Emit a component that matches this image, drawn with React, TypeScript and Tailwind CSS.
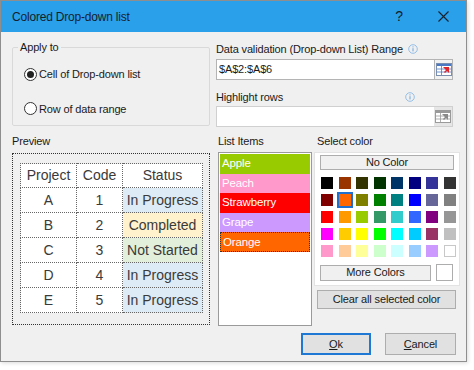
import React from "react";

const palette = [
  ["#000000", "#993300", "#333300", "#003300", "#003366", "#000080", "#333399", "#333333"],
  ["#800000", "#FF6600", "#808000", "#008000", "#008080", "#0000FF", "#666699", "#808080"],
  ["#FF0000", "#FF9900", "#99CC00", "#339966", "#33CCCC", "#3366FF", "#800080", "#969696"],
  ["#FF00FF", "#FFCC00", "#FFFF00", "#00FF00", "#00FFFF", "#00CCFF", "#993366", "#C0C0C0"],
  ["#FF99CC", "#FFCC99", "#FFFF99", "#CCFFCC", "#CCFFFF", "#99CCFF", "#CC99FF", "#FFFFFF"],
];

const items = [
  { name: "Apple", color: "#99CC00" },
  { name: "Peach", color: "#FF99CC" },
  { name: "Strawberry", color: "#FF0000" },
  { name: "Grape", color: "#CC99FF" },
  { name: "Orange", color: "#FF6600" },
];

const rows = [
  { p: "A", c: "1", s: "In Progress", bg: "bg-[#ddebf7]" },
  { p: "B", c: "2", s: "Completed", bg: "bg-[#fff2cc]" },
  { p: "C", c: "3", s: "Not Started", bg: "bg-[#e2efda]" },
  { p: "D", c: "4", s: "In Progress", bg: "bg-[#ddebf7]" },
  { p: "E", c: "5", s: "In Progress", bg: "bg-[#ddebf7]" },
];

function InfoIcon() {
  return (
    <svg width="10" height="10" viewBox="0 0 10 10">
      <circle cx="5" cy="5" r="4.3" fill="none" stroke="#8ab8e6" strokeWidth="0.9" />
      <rect x="4.5" y="4.2" width="1" height="3.2" fill="#6aa3dc" />
      <rect x="4.5" y="2.4" width="1" height="1" fill="#6aa3dc" />
    </svg>
  );
}

function RangeIcon({ disabled }: { disabled?: boolean }) {
  const blue = disabled ? "#9a9a9a" : "#4a78c2";
  const red = disabled ? "#8a8a8a" : "#e0242a";
  return (
    <svg width="16" height="13" viewBox="0 0 16 13">
      <rect x="0.5" y="0.5" width="15" height="12" fill="#ffffff" stroke={disabled ? "#9a9a9a" : "#7a8fb0"} />
      <rect x="1" y="1" width="14" height="2" fill={blue} />
      <line x1="1" y1="6" x2="15" y2="6" stroke={blue} strokeWidth="0.8" />
      <line x1="1" y1="9" x2="15" y2="9" stroke={blue} strokeWidth="0.8" />
      <line x1="5.5" y1="3" x2="5.5" y2="12" stroke={blue} strokeWidth="0.8" />
      <path d="M7 4 L13 4 L13 10 L11 8 L9 10 L8 9 L10 7 Z" fill={red} />
    </svg>
  );
}

function Radio({ checked, label }: { checked?: boolean; label: string }) {
  return (
    <div className="flex items-center gap-[2px]">
      <span className="w-[13px] h-[13px] rounded-full border border-[#333] bg-white flex items-center justify-center">
        {checked && <span className="w-[7px] h-[7px] rounded-full bg-[#222]" />}
      </span>
      <span>{label}</span>
    </div>
  );
}

export default function App() {
  return (
    <div className="w-[474px] h-[370px] bg-white text-[11px] tracking-[-0.15px] text-[#1a1a1a] font-['Liberation_Sans',Arial,sans-serif]">
      <div className="w-[467px] h-[362px] border border-[#8e8e8e] bg-[#f0f0f0] flex flex-col shadow-[1px_1px_4px_rgba(0,0,0,0.15)]">
        {/* title bar */}
        <div className="h-[31px] bg-[#2aa0ea] flex items-center pl-[11px] pr-[17px]">
          <span className="text-[12px] tracking-[-0.2px] text-[#15202b] flex-1 whitespace-nowrap">Colored Drop-down list</span>
          <span className="text-[14px] text-[#15202b] mr-[35px]">?</span>
          <svg width="11" height="11" viewBox="0 0 11 11">
            <path d="M0.5 0.5 L10.5 10.5 M10.5 0.5 L0.5 10.5" stroke="#15202b" strokeWidth="1.1" />
          </svg>
        </div>

        <div className="pl-[11px] pt-[8px] flex-1 flex flex-col">
          {/* upper row */}
          <div className="flex">
            <fieldset className="w-[198px] h-[86px] border border-[#d9d9d9] rounded-[2px] pl-[11px] pt-[12px]">
              <legend className="ml-[-6px] px-[2px] leading-[14px]">Apply to</legend>
              <div className="flex flex-col gap-[18px]">
                <Radio checked label="Cell of Drop-down list" />
                <Radio label="Row of data range" />
              </div>
            </fieldset>

            <div className="ml-[6px] w-[237px] pt-[2px]">
              <div className="flex items-center h-[14px] whitespace-nowrap">
                <span className="flex-1">Data validation (Drop-down List) Range</span>
                <span className="mr-[35px] flex"><InfoIcon /></span>
              </div>
              <div className="mt-[3px] h-[21px] bg-white border border-[#b4b4b4] flex items-center pl-[2px]">
                <span className="flex-1">$A$2:$A$6</span>
                <span className="h-full w-[18px] border-l border-[#b4b4b4] bg-[#f2f2f2] flex items-center justify-center">
                  <RangeIcon />
                </span>
              </div>
              <div className="flex items-center h-[14px] mt-[10px] whitespace-nowrap">
                <span className="flex-1">Highlight rows</span>
                <span className="mr-[38px] flex"><InfoIcon /></span>
              </div>
              <div className="mt-[2px] h-[21px] bg-white border border-[#d0d0d0] flex items-center">
                <span className="flex-1" />
                <span className="h-full w-[18px] bg-[#e6e6e6] flex items-center justify-center">
                  <RangeIcon disabled />
                </span>
              </div>
            </div>
          </div>

          {/* lower row */}
          <div className="flex mt-[7px]">
            <div className="w-[198px]">
              <div className="leading-[14px]">Preview</div>
              <div className="mt-[5px] h-[172px] border border-dotted border-[#333] pt-[9px] pl-[7px]">
                <table className="border-collapse text-[14px] tracking-normal text-[#3a3a3a]">
                  <thead>
                    <tr className="h-[24px] bg-white">
                      <th className="w-[56px] font-normal border border-dotted border-[#666]">Project</th>
                      <th className="w-[46px] font-normal border border-dotted border-[#666]">Code</th>
                      <th className="w-[80px] font-normal border border-dotted border-[#666]">Status</th>
                    </tr>
                  </thead>
                  <tbody>
                    {rows.map((r) => (
                      <tr key={r.p} className="h-[25px]">
                        <td className="text-center bg-white border border-dotted border-[#666]">{r.p}</td>
                        <td className="text-center bg-white border border-dotted border-[#666]">{r.c}</td>
                        <td className={`text-center border border-dotted border-[#666] ${r.bg}`}>{r.s}</td>
                      </tr>
                    ))}
                  </tbody>
                </table>
              </div>
            </div>

            <div className="ml-[8px] w-[94px]">
              <div className="leading-[14px]">List Items</div>
              <div className="mt-[4px] h-[174px] bg-white border border-[#9a9a9a] p-[1px]">
                {items.map((it, i) => (
                  <div
                    key={it.name}
                    className={`h-[19.5px] leading-[18px] pl-[2px] text-white text-[11.5px] ${
                      i === items.length - 1 ? "border border-dotted border-[#333] pl-[1px]" : ""
                    }`}
                    style={{ backgroundColor: it.color }}
                  >
                    {it.name}
                  </div>
                ))}
              </div>
            </div>

            <div className="ml-[2px] w-[146px]">
              <div className="leading-[14px] pl-[3px]">Select color</div>
              <div className="mt-[4px] h-[134px] bg-white border border-[#e3e3e3] pl-[5px] pt-[2px]">
                <div className="w-[134px] h-[15px] bg-[#f0f0f0] border border-[#adadad] flex items-center justify-center">
                  No Color
                </div>
                <div className="mt-[7px] flex flex-col gap-[5px]">
                  {palette.map((row, ri) => (
                    <div key={ri} className="flex gap-[5.5px] pl-[1px]">
                      {row.map((c, ci) => {
                        const sel = ri === 1 && ci === 1;
                        return (
                          <div
                            key={ci}
                            className={`w-[12px] h-[12px] ${
                              sel ? "outline-2 outline-[#1e6fd0]" : c === "#FFFFFF" ? "border border-[#c8c8c8]" : ""
                            }`}
                            style={{ backgroundColor: c }}
                          />
                        );
                      })}
                    </div>
                  ))}
                </div>
                <div className="mt-[7px] flex items-center">
                  <div className="w-[111px] h-[16px] bg-[#f0f0f0] border border-[#adadad] flex items-center justify-center">
                    More Colors
                  </div>
                  <div className="ml-[5px] w-[17px] h-[17px] bg-white border border-[#adadad]" />
                </div>
              </div>
              <div className="mt-[4px] ml-[3px] w-[139px] h-[19px] bg-[#e1e1e1] border border-[#adadad] flex items-center justify-center">
                Clear all selected color
              </div>
            </div>
          </div>

          {/* buttons */}
          <div className="flex mt-[7px] ml-[289px] gap-[14px]">
            <div className="w-[70px] h-[22px] bg-[#e1e1e1] border-2 border-[#1e78d4] flex items-center justify-center">
              <span><u>O</u>k</span>
            </div>
            <div className="w-[71px] h-[22px] bg-[#e1e1e1] border border-[#adadad] flex items-center justify-center">
              <span><u>C</u>ancel</span>
            </div>
          </div>
        </div>
      </div>
    </div>
  );
}
